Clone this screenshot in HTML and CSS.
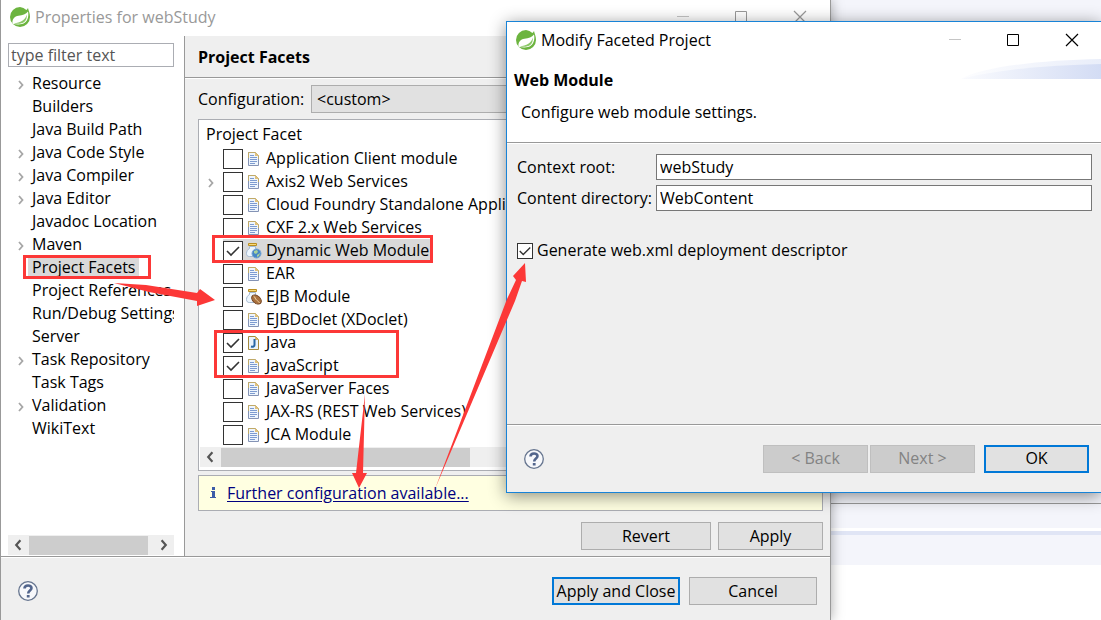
FILE: index.html
```
<!DOCTYPE html>
<html lang="en">
<head>
    <meta charset="UTF-8">
    <meta name="viewport" content="width=device-width, initial-scale=1.0">
    <title>Properties for webStudy</title>
    <link rel="stylesheet" href="styles.css">
</head>
<body>

    <!-- Shared icons -->
    <svg class="icon-defs" aria-hidden="true">
        <symbol id="icon-spring" viewBox="0 0 20 20">
            <path fill="#6cb43f" d="M10 0a10 10 0 1 0 10 10C20 6 18.500 3.500 18 1c-.6 1-1 1.600-1.600 2A10 10 0 0 0 10 0z"/>
            <path fill="#fff" d="M18 4.500c.8 3.500.3 8.500-3 11-3 2.400-8 2.300-12.500 1.200C2 12 4.500 9.500 8.500 8.800c4-.6 7.500-1.300 9.500-4.300z"/>
            <path fill="#8cc868" d="M16.800 7.500c-1 5-6.500 8.500-13 8.800 3.500 1 8 .6 10.700-1.500 2.100-1.700 2.500-4.800 2.300-7.300z"/>
        </symbol>
        <symbol id="icon-doc" viewBox="0 0 16 16">
            <path fill="#eef5fd" stroke="#8493b5" d="M2.500 1.500h7l3 3v10h-10z"/>
            <path fill="none" stroke="#c0aa68" d="M2.500 7V1.500h7l3 3V8"/>
            <path fill="#dfc17c" d="M9 1l4 4H9z"/>
            <path stroke="#7d9bd0" d="M4 4.500h4M4 6.500h7M4 8.500h7M4 10.500h7M4 12.500h5"/>
        </symbol>
        <symbol id="icon-java" viewBox="0 0 16 16">
            <path fill="#e9f3fc" stroke="#a58a3e" d="M2.500 1.500h7l3 3v10h-10z"/>
            <path fill="#d9b667" d="M9 1l4 4H9z"/>
            <path fill="none" stroke="#2867a5" stroke-width="2" d="M8.500 4v6c0 1.500-1.500 2-3.500 1.500"/>
        </symbol>
        <symbol id="icon-jar" viewBox="0 0 16 16">
            <path fill="#edf6fe" stroke="#a5bad2" d="M3.500 3.500h6v2c2 1 3 3 3 5s-1 3-3 3h-6c-2 0-3-1-3-3s1-4 3-5z"/>
            <path fill="#f9d978" stroke="#b98e22" d="M2.500.5h8v2h-8z"/>
        </symbol>
        <symbol id="icon-web" viewBox="0 0 16 16">
            <use href="#icon-jar"/>
            <circle cx="10.500" cy="10.500" r="4.500" fill="#4686c5" stroke="#76a5d4"/>
            <path fill="#a8d29a" d="M8 8l3-1 1 2-2 2-2-1zM11 12l3-2-1 3-2 1z"/>
        </symbol>
        <symbol id="icon-ejb" viewBox="0 0 16 16">
            <use href="#icon-jar"/>
            <ellipse cx="10.500" cy="10.500" rx="5.500" ry="3.700" fill="#a9713e" stroke="#72421f" transform="rotate(42 10.500 10.500)"/>
            <path fill="none" stroke="#f0d1a3" d="M7.500 7c2 1 1.500 3 3 4s2 1.500 3 3"/>
        </symbol>
        <symbol id="icon-chevron" viewBox="0 0 6 10">
            <path fill="none" stroke="currentColor" stroke-width="1.800" d="M1 1l3.500 4L1 9"/>
        </symbol>
        <symbol id="icon-help" viewBox="0 0 20 20">
            <circle cx="10" cy="10" r="9.300" fill="#f7f8fb" stroke="#66758f" stroke-width="1.300"/>
            <path fill="none" stroke="#52658c" stroke-width="2.600" d="M6.500 7.500C6.500 3.500 13.500 3.500 13.500 7c0 2.500-3.300 2.500-3.300 5.500"/>
            <path fill="#52658c" d="M8.800 14h2.800v2.500H8.800z"/>
        </symbol>
        <symbol id="icon-controls" viewBox="0 0 130 14">
            <path stroke="#c5c5c5" d="M0 6.500h12"/>
            <path fill="none" stroke="currentColor" d="M58.500 1.500h11v11h-11z"/>
            <path stroke="currentColor" stroke-width="1.200" d="M117 1l12 12M129 1l-12 12"/>
        </symbol>
    </svg>

    <div class="workbench">
        <div class="editor-area"></div>
        <div class="tab-strip"></div>
        <div class="view-strip"></div>
    </div>

    <section class="window properties">
        <header class="title-bar inactive">
            <svg class="app-icon"><use href="#icon-spring"/></svg>
            <span>Properties for webStudy</span>
            <svg class="controls"><use href="#icon-controls"/></svg>
        </header>

        <div class="window-body">
            <nav class="sidebar">
                <input type="text" class="filter" placeholder="type filter text" aria-label="Filter">
                <ul class="tree">
                    <li><svg class="chevron"><use href="#icon-chevron"/></svg><span>Resource</span></li>
                    <li><span>Builders</span></li>
                    <li><span>Java Build Path</span></li>
                    <li><svg class="chevron"><use href="#icon-chevron"/></svg><span>Java Code Style</span></li>
                    <li><svg class="chevron"><use href="#icon-chevron"/></svg><span>Java Compiler</span></li>
                    <li><svg class="chevron"><use href="#icon-chevron"/></svg><span>Java Editor</span></li>
                    <li><span>Javadoc Location</span></li>
                    <li><svg class="chevron"><use href="#icon-chevron"/></svg><span>Maven</span></li>
                    <li class="selected"><span>Project Facets</span></li>
                    <li><span>Project References</span></li>
                    <li><span>Run/Debug Settings</span></li>
                    <li><span>Server</span></li>
                    <li><svg class="chevron"><use href="#icon-chevron"/></svg><span>Task Repository</span></li>
                    <li><span>Task Tags</span></li>
                    <li><svg class="chevron"><use href="#icon-chevron"/></svg><span>Validation</span></li>
                    <li><span>WikiText</span></li>
                </ul>
                <div class="scrollbar">
                    <svg class="arrow left"><use href="#icon-chevron"/></svg>
                    <div class="thumb"></div>
                    <svg class="arrow"><use href="#icon-chevron"/></svg>
                </div>
            </nav>

            <main class="page">
                <h1>Project Facets</h1>
                <div class="page-content">
                    <div class="config-row">
                        <label for="configuration">Configuration:</label>
                        <select id="configuration">
                            <option>&lt;custom&gt;</option>
                        </select>
                    </div>

                    <div class="facets">
                        <h2>Project Facet</h2>
                        <ul class="facet-list">
                            <li><label><input type="checkbox"><svg><use href="#icon-doc"/></svg><span>Application Client module</span></label></li>
                            <li><svg class="chevron"><use href="#icon-chevron"/></svg><label><input type="checkbox"><svg><use href="#icon-doc"/></svg><span>Axis2 Web Services</span></label></li>
                            <li><label><input type="checkbox"><svg><use href="#icon-doc"/></svg><span>Cloud Foundry Standalone Application</span></label></li>
                            <li><label><input type="checkbox"><svg><use href="#icon-doc"/></svg><span>CXF 2.x Web Services</span></label></li>
                            <li class="selected"><label><input type="checkbox" checked><svg><use href="#icon-web"/></svg><span>Dynamic Web Module</span></label></li>
                            <li><label><input type="checkbox"><svg><use href="#icon-doc"/></svg><span>EAR</span></label></li>
                            <li><label><input type="checkbox"><svg><use href="#icon-ejb"/></svg><span>EJB Module</span></label></li>
                            <li><label><input type="checkbox"><svg><use href="#icon-doc"/></svg><span>EJBDoclet (XDoclet)</span></label></li>
                            <li><label><input type="checkbox" checked><svg><use href="#icon-java"/></svg><span>Java</span></label></li>
                            <li><label><input type="checkbox" checked><svg><use href="#icon-doc"/></svg><span>JavaScript</span></label></li>
                            <li><label><input type="checkbox"><svg><use href="#icon-doc"/></svg><span>JavaServer Faces</span></label></li>
                            <li><label><input type="checkbox"><svg><use href="#icon-doc"/></svg><span>JAX-RS (REST Web Services)</span></label></li>
                            <li><label><input type="checkbox"><svg><use href="#icon-doc"/></svg><span>JCA Module</span></label></li>
                        </ul>
                        <div class="scrollbar">
                            <svg class="arrow left"><use href="#icon-chevron"/></svg>
                            <div class="thumb wide"></div>
                        </div>
                    </div>

                    <div class="notice">
                        <svg class="info" viewBox="0 0 6 14">
                            <path fill="#3c5ca8" d="M2 1h3v3H2zM1 5h4v6h1v1H0v-1h2V6H1z"/>
                        </svg>
                        <a href="#">Further configuration available...</a>
                    </div>

                    <div class="page-buttons">
                        <button type="button" class="revert">Revert</button>
                        <button type="button">Apply</button>
                    </div>
                </div>
            </main>
        </div>

        <footer class="dialog-footer">
            <svg class="help"><use href="#icon-help"/></svg>
            <button type="button" class="default">Apply and Close</button>
            <button type="button">Cancel</button>
        </footer>
    </section>

    <section class="window modify">
        <header class="title-bar">
            <svg class="app-icon"><use href="#icon-spring"/></svg>
            <span>Modify Faceted Project</span>
            <svg class="controls"><use href="#icon-controls"/></svg>
        </header>
        <div class="banner">
            <h2>Web Module</h2>
            <p>Configure web module settings.</p>
            <svg class="swoosh" viewBox="0 0 140 20">
                <defs>
                    <linearGradient id="swoosh-fill">
                        <stop offset="0" stop-color="#fafbfe"/>
                        <stop offset="1" stop-color="#d3dcf4"/>
                    </linearGradient>
                </defs>
                <path fill="url(#swoosh-fill)" opacity=".5" d="M0 20C20 8 80 1 140 0v20z"/>
                <path fill="url(#swoosh-fill)" d="M0 20C40 10 90 6 140 5v15z"/>
            </svg>
        </div>
        <form class="settings">
            <label for="contextRoot">Context root:</label>
            <input type="text" id="contextRoot" value="webStudy">
            <label for="contentDir">Content directory:</label>
            <input type="text" id="contentDir" value="WebContent">
            <label class="generate"><input type="checkbox" checked>Generate web.xml deployment descriptor</label>
        </form>
        <footer class="dialog-footer">
            <svg class="help"><use href="#icon-help"/></svg>
            <button type="button" disabled>&lt; Back</button>
            <button type="button" disabled>Next &gt;</button>
            <button type="button" class="default">OK</button>
        </footer>
    </section>

    <!-- Red marks drawn over the windows -->
    <svg class="marks" viewBox="0 0 1101 620" aria-hidden="true">
        <g fill="none" stroke="#fc3837" stroke-width="3">
            <rect x="24.500" y="256.500" width="125" height="21"/>
            <rect x="213.500" y="236.500" width="218" height="25"/>
            <rect x="215.500" y="331.500" width="182" height="45"/>
        </g>
        <g fill="#fc3837">
            <path d="M114 283l32 2 51 8 3-4 15 11-18 6v-5l-48-9z"/>
            <path d="M365 394l-2 79h4l-8 15-7-15h4z"/>
            <path d="M435 489l72-190 9-19-3-4 12-13 1 19-4-1-7 20z"/>
        </g>
    </svg>

</body>
</html>
```
FILE: styles.css
```
* {
    box-sizing: border-box;
}

body {
    font-family: "Open Sans", "Noto Sans", sans-serif;
    font-size: 16px;
    line-height: 23px;
    color: #000;
    margin: 0;
    height: 100vh;
    position: relative;
    overflow: hidden;
    background-color: #fff;
}

h1, h2, p, ul {
    margin: 0;
    padding: 0;
    font-size: 16px;
    list-style: none;
}

svg {
    flex: none;
}

.icon-defs {
    position: absolute;
    width: 0;
    height: 0;
}

/* Workbench behind the dialogs */
.workbench {
    height: 565px;
    display: flex;
    flex-direction: column;
    background-color: #f4f5fb;
}

.editor-area {
    height: 504px;
    border-bottom: 1px solid #999;
}

.tab-strip {
    height: 24px;
}

.view-strip {
    height: 7px;
    border-top: 3px solid #fff;
    background-color: #e0e5f5;
}

/* Windows */
.window {
    position: absolute;
    display: flex;
    flex-direction: column;
    background-color: #efefef;
}

.properties {
    top: 0;
    left: 0;
    right: 270px;
    bottom: 0;
    border: solid #999;
    border-width: 0 1px;
    box-shadow: 0 0 12px rgba(0, 0, 0, 0.35);
}

.modify {
    top: 21px;
    left: 506px;
    right: 0;
    border: 1px solid #1883d7;
    border-right: 0;
    box-shadow: 0 3px 16px rgba(0, 0, 0, 0.45);
}

.title-bar {
    display: flex;
    align-items: center;
    height: 36px;
    padding: 0 23px 2px 9px;
    background-color: #fff;
}

.title-bar.inactive {
    color: #999;
}

.modify .title-bar {
    padding: 0 22px 0 9px;
}

.app-icon {
    width: 20px;
    height: 20px;
    margin-right: 5px;
}

.controls {
    width: 130px;
    height: 14px;
    margin-left: auto;
}

.window-body {
    flex: 1;
    display: flex;
    min-height: 0;
}

/* Left side */
.sidebar {
    width: 184px;
    display: flex;
    flex-direction: column;
    padding: 7px 10px 1px 7px;
    background-color: #fff;
    border-right: 1px solid #999;
}

input[type="text"], select {
    font: inherit;
    color: inherit;
    border: 1px solid #777;
    border-radius: 0;
    background-color: #fff;
    outline: none;
}

input.filter {
    width: 100%;
    height: 24px;
    padding: 0 2px;
    border-color: #abadb3;
}

.filter::placeholder {
    color: #555;
    opacity: 1;
}

.tree {
    flex: 1;
    margin-top: 5px;
    overflow: hidden;
}

.tree li {
    position: relative;
    height: 23px;
    padding-left: 20px;
    white-space: nowrap;
}

.tree span {
    display: inline-block;
    padding: 0 4px;
}

.selected span {
    background-color: #d9d9d9;
}

.chevron {
    position: absolute;
    top: 8px;
    left: 10px;
    width: 6px;
    height: 10px;
    color: #a6a6a6;
}

.scrollbar {
    display: flex;
    align-items: center;
    height: 20px;
    padding: 0 6px;
    background-color: #efefef;
    color: #555;
}

.arrow {
    width: 8px;
    height: 12px;
    margin-left: auto;
}

.arrow.left {
    margin: 0 7px 0 0;
    transform: scaleX(-1);
}

.thumb {
    width: 119px;
    height: 19px;
    background-color: #cdcdcd;
}

.thumb.wide {
    width: 249px;
}

/* Project Facets page */
.page {
    flex: 1;
    display: flex;
    flex-direction: column;
    min-width: 0;
}

.page h1 {
    height: 42px;
    padding: 0 13px;
    line-height: 43px;
    border-bottom: 1px solid #999;
    box-shadow: 0 1px #fff;
}

.page-content {
    display: flex;
    flex-direction: column;
    padding: 7px 7px 0 13px;
}

.config-row {
    display: grid;
    grid-template-columns: 113px 1fr;
    align-items: center;
}

.config-row select {
    height: 28px;
    padding: 0 5px;
    appearance: none;
    background-color: #e1e1e1;
    border-color: #adadad;
}

.facets {
    height: 352px;
    margin-top: 6px;
    padding: 3px 1px 0;
    background-color: #fff;
    border: 1px solid #abadb3;
}

.facets h2 {
    height: 24px;
    padding-left: 6px;
    font-weight: normal;
}

.facet-list li {
    position: relative;
    height: 23px;
    padding-left: 23px;
}

.facet-list .chevron {
    left: 8px;
}

.facet-list label {
    display: flex;
    align-items: center;
    width: max-content;
}

.facet-list label svg {
    width: 16px;
    height: 16px;
    margin-left: 3px;
}

.facet-list span {
    max-width: 244px;
    padding: 0 3px 0 4px;
    overflow: hidden;
    white-space: nowrap;
}

.facet-list .selected label {
    background-color: #d9d9d9;
}

input[type="checkbox"] {
    appearance: none;
    flex: none;
    width: 20px;
    height: 20px;
    margin: 0;
    border: 1px solid #333;
    background: #fff center / 16px 16px no-repeat;
}

input[type="checkbox"]:checked {
    background-image: url("data:image/svg+xml,%3Csvg xmlns='http://www.w3.org/2000/svg' viewBox='0 0 16 16'%3E%3Cpath fill='none' stroke='%23333' stroke-width='1.6' d='M2 8l4 4 8-8'/%3E%3C/svg%3E");
}

.facets .scrollbar {
    margin-top: 1px;
}

.notice {
    display: flex;
    align-items: center;
    gap: 11px;
    height: 36px;
    margin-top: 4px;
    padding: 0 11px;
    background-color: #ffffe1;
    border: 1px solid #abadb3;
}

.info {
    width: 6px;
    height: 14px;
}

.notice a {
    color: #000080;
    text-underline-offset: 2px;
}

/* Buttons */
button {
    width: 105px;
    height: 28px;
    padding: 0;
    font: inherit;
    color: #000;
    background-color: #e1e1e1;
    border: 1px solid #adadad;
}

button.default {
    border: 2px solid #0078d7;
}

button:disabled {
    color: #838383;
    background-color: #ccc;
    border-color: #bfbfbf;
}

.page-buttons {
    display: flex;
    justify-content: flex-end;
    gap: 7px;
    margin-top: 11px;
}

.page-buttons .revert {
    width: 130px;
}

.dialog-footer {
    display: flex;
    align-items: center;
    border-top: 1px solid #999;
    box-shadow: inset 0 1px #fff;
}

.properties .dialog-footer {
    gap: 9px;
    height: 64px;
    padding: 5px 13px 0 17px;
}

.properties .dialog-footer button {
    width: 128px;
}

.help {
    width: 20px;
    height: 20px;
    margin-right: auto;
}

/* Modify Faceted Project */
.banner {
    position: relative;
    height: 84px;
    padding: 11px 7px;
    background-color: #fff;
}

.banner p {
    padding: 9px 7px;
}

.swoosh {
    position: absolute;
    top: 1px;
    right: 0;
    width: 140px;
    height: 20px;
}

.settings {
    display: grid;
    grid-template-columns: 134px 1fr;
    gap: 5px;
    align-content: start;
    align-items: center;
    height: 282px;
    padding: 11px 9px 0 10px;
    border-top: 1px solid #999;
    box-shadow: inset 0 1px #fff;
    white-space: nowrap;
}

.settings input[type="text"] {
    min-width: 0;
    height: 26px;
    padding: 0 3px;
}

.generate {
    grid-column: 1 / 3;
    display: flex;
    align-items: center;
    gap: 4px;
    margin-top: 23px;
}

.generate input[type="checkbox"] {
    width: 16px;
    height: 16px;
    background-size: 14px 14px;
}

.modify .dialog-footer {
    gap: 2px;
    height: 68px;
    padding: 0 12px 0 17px;
}

.modify .default {
    margin-left: 7px;
}

.marks {
    position: absolute;
    top: 0;
    left: 0;
    width: 1101px;
    height: 620px;
    pointer-events: none;
}
```
